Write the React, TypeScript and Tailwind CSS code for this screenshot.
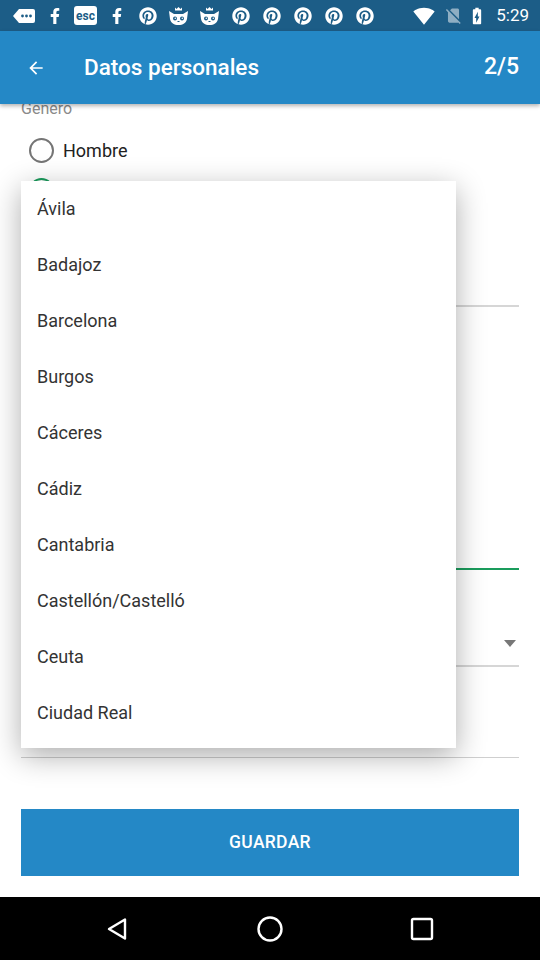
import React from 'react';
import { FaFacebookF, FaPinterest } from 'react-icons/fa';
import { MdSignalWifi4Bar, MdSignalCellularNoSim, MdBatteryChargingFull } from 'react-icons/md';

const provinces = [
  'Ávila',
  'Badajoz',
  'Barcelona',
  'Burgos',
  'Cáceres',
  'Cádiz',
  'Cantabria',
  'Castellón/Castelló',
  'Ceuta',
  'Ciudad Real',
];

function MoreNotifs() {
  return (
    <svg width="22" height="14" viewBox="0 0 22 14">
      <path d="M6 0H20a2 2 0 0 1 2 2V12a2 2 0 0 1-2 2H6L0 7Z" fill="#fff" />
      <circle cx="9.5" cy="7" r="1.4" fill="#1c5d87" />
      <circle cx="13.5" cy="7" r="1.4" fill="#1c5d87" />
      <circle cx="17.5" cy="7" r="1.4" fill="#1c5d87" />
    </svg>
  );
}

function CatIcon() {
  return (
    <svg width="21" height="20" viewBox="0 0 21 20">
      <path d="M7 1.5l1.5 1.5 2-2 2 2 1.5-1.5v3H7z" fill="#fff" />
      <path d="M1 5l5 3h9l5-3-1 8c-1 4-4 6-8.5 6S3 17 2 13z" fill="#fff" />
      <circle cx="7" cy="12.5" r="2" fill="#1c5d87" />
      <circle cx="14" cy="12.5" r="2" fill="#1c5d87" />
      <circle cx="7.3" cy="12.2" r="0.8" fill="#fff" />
      <circle cx="14.3" cy="12.2" r="0.8" fill="#fff" />
      <path d="M9.5 15.5h2" stroke="#1c5d87" strokeWidth="1" />
    </svg>
  );
}

function StatusBar() {
  const slot = 'w-[31px] flex justify-center items-center';
  return (
    <div className="h-[31px] bg-[#1c5d87] flex items-center pl-[8px] pr-[11px] text-white shrink-0">
      <div className={slot}><MoreNotifs /></div>
      <div className={slot}><FaFacebookF size={16} /></div>
      <div className={slot}>
        <div className="w-[23px] h-[19px] bg-white rounded-[3px] flex items-center justify-center text-[#1c5d87] text-[12px] font-bold font-['Roboto'] leading-none">
          esc
        </div>
      </div>
      <div className={slot}><FaFacebookF size={16} /></div>
      <div className={slot}><FaPinterest size={18} /></div>
      <div className={slot}><CatIcon /></div>
      <div className={slot}><CatIcon /></div>
      <div className={slot}><FaPinterest size={18} /></div>
      <div className={slot}><FaPinterest size={18} /></div>
      <div className={slot}><FaPinterest size={18} /></div>
      <div className={slot}><FaPinterest size={18} /></div>
      <div className={slot}><FaPinterest size={18} /></div>
      <div className="ml-auto flex items-center">
        <MdSignalWifi4Bar size={22} />
        <MdSignalCellularNoSim size={19} className="ml-[9px] opacity-50" />
        <MdBatteryChargingFull size={20} className="ml-[4px]" />
        <span className="ml-[9px] text-[17px] leading-none font-['Roboto']">5:29</span>
      </div>
    </div>
  );
}

function AppBar() {
  return (
    <div className="h-[73px] bg-[#2488c6] flex items-center text-white relative z-10 shadow-[0_2px_4px_rgba(0,0,0,0.3)] shrink-0">
      <svg width="20" height="20" viewBox="0 0 24 24" className="ml-[26px]">
        <path d="M20 11H7.83l5.59-5.59L12 4l-8 8 8 8 1.41-1.41L7.83 13H20v-2z" fill="#fff" />
      </svg>
      <h1 className="ml-[38px] text-[22.5px] font-medium">Datos personales</h1>
      <span className="ml-auto mr-[21px] text-[23px] font-medium">2/5</span>
    </div>
  );
}

function Radio({ label, checked }: { label: string; checked?: boolean }) {
  return (
    <div className="h-[40px] flex items-center pl-[8px]">
      <div
        className={`w-[25px] h-[25px] rounded-full border-[2.5px] ${
          checked ? 'border-[#1a9c5c]' : 'border-[#757575]'
        } flex items-center justify-center`}
      >
        {checked && <div className="w-[12px] h-[12px] rounded-full bg-[#1a9c5c]" />}
      </div>
      <span className="ml-[9px] text-[18px] text-[#212121]">{label}</span>
    </div>
  );
}

function NavBar() {
  return (
    <div className="h-[63px] bg-black flex items-center justify-center gap-[124px] shrink-0">
      <svg width="28" height="28" viewBox="0 0 28 28">
        <path d="M21 4.5v19L5 14z" fill="none" stroke="#fff" strokeWidth="2.4" strokeLinejoin="round" />
      </svg>
      <svg width="28" height="28" viewBox="0 0 28 28">
        <circle cx="14" cy="14" r="11.5" fill="none" stroke="#fff" strokeWidth="2.4" />
      </svg>
      <svg width="28" height="28" viewBox="0 0 28 28">
        <rect x="4" y="4" width="20" height="20" rx="1.5" fill="none" stroke="#fff" strokeWidth="2.4" />
      </svg>
    </div>
  );
}

export default function App() {
  return (
    <div className="w-[540px] h-[960px] bg-white flex flex-col overflow-hidden font-['Roboto',sans-serif]">
      <StatusBar />
      <AppBar />

      <main className="flex-1 relative px-[21px]">
        <p className="-mt-[5px] h-[19px] leading-[19px] text-[16px] text-[#8a8a8a]">Género</p>
        <div className="mt-[12px]">
          <Radio label="Hombre" />
          <Radio label="Mujer" checked />
        </div>

        <div className="h-[97px] border-b-2 border-[#d6d6d6]" />
        <div className="h-[263px] border-b-2 border-[#1a9c5c]" />
        <div className="h-[97px] border-b-2 border-[#d6d6d6] flex items-end justify-end pb-[18px] pr-[3px]">
          <svg width="12" height="7" viewBox="0 0 12 7">
            <path d="M0 0h12L6 7z" fill="#777" />
          </svg>
        </div>
        <div className="h-[91px] border-b border-[#cfcfcf]" />

        <button className="mt-[51px] w-full h-[67px] bg-[#2488c6] text-white text-[17.5px] font-medium tracking-[0.3px]">
          GUARDAR
        </button>

        <ul className="absolute left-[21px] top-[77px] w-[435px] h-[567px] bg-white shadow-[0_8px_28px_rgba(0,0,0,0.32)] z-20">
          {provinces.map((p) => (
            <li key={p} className="h-[56px] flex items-center pl-[16px] pb-[1px] text-[18px] text-[#333]">
              {p}
            </li>
          ))}
        </ul>
      </main>

      <NavBar />
    </div>
  );
}
